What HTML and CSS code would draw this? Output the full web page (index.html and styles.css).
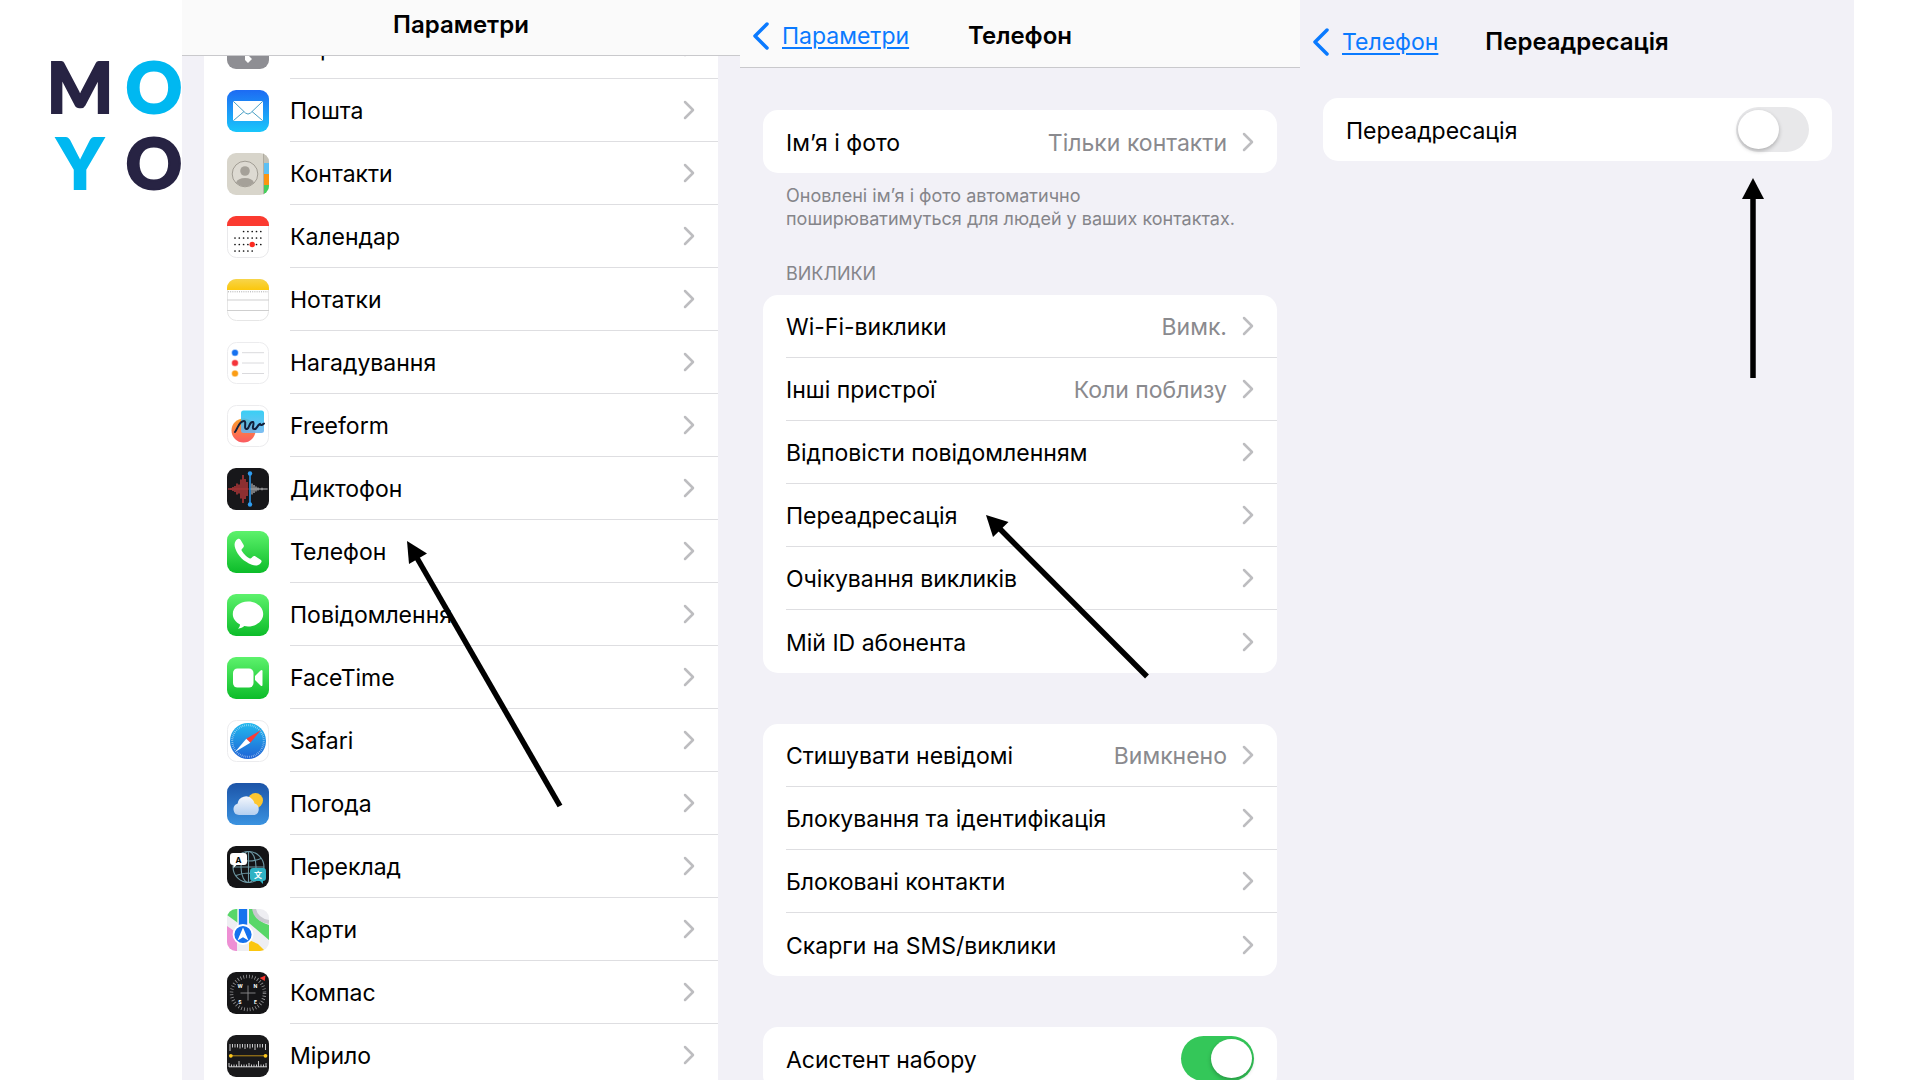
FILE: index.html
```html
<!DOCTYPE html>
<html lang="uk">
<head>
  <meta charset="UTF-8" />
  <meta name="viewport" content="width=device-width, initial-scale=1" />
  <title>Переадресація викликів</title>
  <link rel="stylesheet" href="styles.css">
</head>
<body>

<svg class="defs" aria-hidden="true">
  <defs>
    <linearGradient id="g-green" x1="0" y1="0" x2="0" y2="1"><stop offset="0" stop-color="#5df26c"/><stop offset="1" stop-color="#0cbc29"/></linearGradient>
    <linearGradient id="g-mail" x1="0" y1="0" x2="0" y2="1"><stop offset="0" stop-color="#1d6bf3"/><stop offset="1" stop-color="#19c6fb"/></linearGradient>
    <linearGradient id="g-note" x1="0" y1="0" x2="0" y2="1"><stop offset="0" stop-color="#f7d54b"/><stop offset="1" stop-color="#fbc70c"/></linearGradient>
    <linearGradient id="g-sky" x1="0" y1="0" x2="0" y2="1"><stop offset="0" stop-color="#1c54a8"/><stop offset="1" stop-color="#3a92e0"/></linearGradient>
    <linearGradient id="g-cloud" x1="0" y1="0" x2="0" y2="1"><stop offset="0" stop-color="#f4f7fc"/><stop offset="1" stop-color="#b4cff0"/></linearGradient>
    <linearGradient id="g-safari" x1="0" y1="0" x2="0" y2="1"><stop offset="0" stop-color="#22b9ee"/><stop offset="1" stop-color="#1f63d6"/></linearGradient>
    <linearGradient id="g-ball" x1="0" y1="0" x2="0" y2="1"><stop offset="0" stop-color="#fba02c"/><stop offset="1" stop-color="#fb5a62"/></linearGradient>
    <linearGradient id="g-square" x1="0" y1="0" x2="0" y2="1"><stop offset="0" stop-color="#1ec8f3"/><stop offset="1" stop-color="#6db4ef"/></linearGradient>
    <clipPath id="tile"><rect width="42" height="42" rx="9"/></clipPath>
  </defs>

  <symbol id="chevron" viewBox="0 0 12 20"><path d="M2 2l8 8-8 8" fill="none" stroke="currentColor" stroke-width="2.5" stroke-linecap="round" stroke-linejoin="round"/></symbol>
  <symbol id="back" viewBox="0 0 18 28"><path d="M15 2L3 14l12 12" fill="none" stroke="currentColor" stroke-width="3.5" stroke-linecap="round" stroke-linejoin="round"/></symbol>

  <symbol id="i-passwords" viewBox="0 0 42 42">
    <rect width="42" height="42" rx="9" fill="#8e8e93"/>
    <circle cx="21" cy="14" r="7" fill="#fff"/>
    <path d="M18 19h6v8l-2 2 3 3-4 4-3-3z" fill="#fff"/>
  </symbol>

  <symbol id="i-mail" viewBox="0 0 42 42">
    <rect width="42" height="42" rx="9" fill="url(#g-mail)"/>
    <rect x="6" y="11" width="30" height="20" rx="1.5" fill="#fff"/>
    <path d="M6.5 11.500l12 11.500q2.500 2.200 5 0l12-11.500M6.500 30.500L17 21.500M35.500 30.500L25 21.500" fill="none" stroke="#4a9fc4" stroke-width="1"/>
  </symbol>

  <symbol id="i-contacts" viewBox="0 0 42 42">
    <g clip-path="url(#tile)">
      <rect width="42" height="42" fill="#d8d5cb"/>
      <rect x="36" width="6" height="10" fill="#c4c1b6"/>
      <rect x="37" y="10" width="5" height="11" fill="#5cc0f5"/>
      <rect x="37" y="21" width="5" height="11" fill="#fb9410"/>
      <rect x="37" y="32" width="5" height="10" fill="#45cf5c"/>
      <path d="M36.500 0v42" stroke="#aaa69b" stroke-width=".8"/>
      <circle cx="18" cy="21" r="12.800" fill="#dddad2" stroke="#a19d94" stroke-width="1"/>
      <circle cx="18" cy="18" r="4.800" fill="#a5a199"/>
      <path d="M9 29.500q2-4.500 9-4.500t9 4.500q-3.500 4-9 4t-9-4z" fill="#a5a199"/>
    </g>
  </symbol>

  <symbol id="i-calendar" viewBox="0 0 42 42">
    <rect x=".5" y=".5" width="41" height="41" rx="9" fill="#fff" stroke="#e9e9eb"/>
    <path d="M0 10V9a9 9 0 0 1 9-9h24a9 9 0 0 1 9 9v1z" fill="#fb3a30"/>
    <g stroke="#111" stroke-width="1.700" stroke-linecap="round" stroke-dasharray="0 4.300">
      <path d="M16.600 15.500h17.500M8 22h26.100M8 28.500h26.100M8 35h17.500"/>
    </g>
    <circle cx="25.200" cy="28.500" r="2.700" fill="#fb2a20"/>
  </symbol>

  <symbol id="i-notes" viewBox="0 0 42 42">
    <rect x=".5" y=".5" width="41" height="41" rx="9" fill="#fff" stroke="#e6e6e6"/>
    <path d="M0 11V9a9 9 0 0 1 9-9h24a9 9 0 0 1 9 9v2z" fill="url(#g-note)"/>
    <path d="M1 12.800h40" stroke="#aaa" stroke-width="1" stroke-dasharray="1 1.200"/>
    <path d="M0 21h42M0 31.500h42" stroke="#cfcfcf" stroke-width="1"/>
  </symbol>

  <symbol id="i-reminders" viewBox="0 0 42 42">
    <rect x=".5" y=".5" width="41" height="41" rx="9" fill="#fff" stroke="#ececee"/>
    <g stroke-opacity=".45" stroke-width="1.500">
      <circle cx="8" cy="10.700" r="2.800" fill="#1672f0" stroke="#1672f0"/>
      <circle cx="8" cy="21" r="2.800" fill="#f5353b" stroke="#f5353b"/>
      <circle cx="8" cy="31.500" r="2.800" fill="#fb9d16" stroke="#fb9d16"/>
    </g>
    <path d="M15 10.700h22M15 21h22M15 31.500h22" stroke="#dadadd" stroke-width="1"/>
  </symbol>

  <symbol id="i-freeform" viewBox="0 0 42 42">
    <rect x=".5" y=".5" width="41" height="41" rx="9" fill="#fff" stroke="#ececee"/>
    <circle cx="16.500" cy="25.500" r="12" fill="url(#g-ball)"/>
    <rect x="14" y="5.500" width="23" height="22.500" rx="2.500" fill="url(#g-square)" fill-opacity=".88"/>
    <path d="M8 27c3-4 4-11 9-11 3 0-1 9 3 8 3-1 2-8 6-7 2 1-2 7 1 7 3 1 3-4 6-5 1 2 2 1 4-.5" fill="none" stroke="#12203c" stroke-width="2" stroke-linecap="round"/>
  </symbol>

  <symbol id="i-voice" viewBox="0 0 42 42">
    <rect width="42" height="42" rx="9" fill="#17171a"/>
    <path d="M2 20.500v1M4 20v2M6 19v4M8 18v6M10 15.500v11M12 16.500v9M14 11.500v19M16 7v28M18 11v20M20 14v14" stroke="#b5393a" stroke-width="1.500"/>
    <path d="M25 15.500v11M27 17v8M29 18.500v5M31 19.500v3M33 20.500v1M35 19.800v2.400M37 20.500v1M39 20.500v1" stroke="#c9c9cb" stroke-width="1.100"/>
    <path d="M1 21h21" stroke="#b5393a" stroke-width=".8"/>
    <path d="M23 21h18" stroke="#b9b9bb" stroke-width=".7"/>
    <path d="M23 5v32" stroke="#2f9df0" stroke-width="1.500"/>
    <circle cx="23" cy="5.500" r="2.200" fill="#2f9df0"/><circle cx="23" cy="36.500" r="2.200" fill="#2f9df0"/>
  </symbol>

  <symbol id="i-phone" viewBox="0 0 42 42">
    <rect width="42" height="42" rx="9" fill="url(#g-green)"/>
    <path d="M9 9.500c1.500-2 3.500-2.300 4.500-.8l3 5c.8 1.400.4 2.300-.6 3.300l-1 1c-.6.700-.4 1.300 0 2 2 3.300 4.500 5.600 7.500 7.300.8.400 1.400.4 2-.2l1.200-1.300c.9-.9 1.800-1 3-.3l5 3.200c1.500 1 1.300 2.300-.2 3.700-2.200 2.200-5 2.700-8.500 1.300C16.500 30.500 11 25 8.300 17.500 7.200 14.500 7.300 11.700 9 9.500z" fill="#fff"/>
  </symbol>

  <symbol id="i-messages" viewBox="0 0 42 42">
    <rect width="42" height="42" rx="9" fill="url(#g-green)"/>
    <path d="M21 7.500c8.500 0 15.200 5.600 15.200 12.500S29.500 32.500 21 32.500c-1.300 0-2.500-.1-3.700-.4-1.600 1.500-3.500 2.400-6.300 2.700 1.300-1.300 2-2.700 2-4.300C8.600 28.200 5.800 24.500 5.800 20 5.800 13.100 12.500 7.500 21 7.500z" fill="#fff"/>
  </symbol>

  <symbol id="i-facetime" viewBox="0 0 42 42">
    <rect width="42" height="42" rx="9" fill="url(#g-green)"/>
    <rect x="6" y="11.500" width="20.500" height="19" rx="4.500" fill="#fff"/>
    <path d="M28 19l5.500-5.500q2-1.500 2 .8v13.400q0 2.300-2 .8L28 23z" fill="#fff"/>
  </symbol>

  <symbol id="i-safari" viewBox="0 0 42 42">
    <rect x=".5" y=".5" width="41" height="41" rx="9" fill="#fff" stroke="#ececee"/>
    <circle cx="21" cy="21" r="18" fill="url(#g-safari)"/>
    <circle cx="21" cy="21" r="15.800" fill="none" stroke="#fff" stroke-opacity=".65" stroke-width="2" stroke-dasharray=".6 1.300"/>
    <path d="M34 10L19.300 18.700l4 4z" fill="#fb3b36"/>
    <path d="M8 32l11.300-13.300 4 4z" fill="#fff"/>
  </symbol>

  <symbol id="i-weather" viewBox="0 0 42 42">
    <rect width="42" height="42" rx="9" fill="url(#g-sky)"/>
    <circle cx="28.500" cy="17.500" r="7.500" fill="#fdc62f"/>
    <path d="M12 32a5.800 5.800 0 0 1-1.500-11.300A8.500 8.500 0 0 1 25.500 16.500q1.500 1.500 2 4A6 6 0 0 1 27.500 32z" fill="url(#g-cloud)"/>
  </symbol>

  <symbol id="i-maps" viewBox="0 0 42 42">
    <g clip-path="url(#tile)">
      <rect width="42" height="42" fill="#eeeef2"/>
      <path d="M0 0h11v14L0 6zM22 0h4q2 12 16 16v15L22 14z" fill="#58d768"/>
      <path d="M0 17l10 7v18H0z" fill="#ee8fd4"/>
      <path d="M22 42V31l9 4 7 7z" fill="#fbc60f"/>
      <path d="M27 0q2 11 15 13" fill="none" stroke="#c8c8ce" stroke-width="4"/>
      <path d="M11.500 0h9v22h-9z" fill="#1572ee"/>
      <path d="M11 0v20M21 0v20" stroke="#fff" stroke-width="1.200"/>
      <circle cx="16" cy="25.500" r="9.500" fill="#1572ee" stroke="#fff" stroke-width="1.800"/>
      <path d="M16 18.500l5.500 13-5.500-3.200-5.500 3.200z" fill="#fff"/>
    </g>
  </symbol>

  <symbol id="i-measure" viewBox="0 0 42 42">
    <rect width="42" height="42" rx="9" fill="#19191b"/>
    <path d="M3 9v7M13 9v4.500M23 9v4.500M28 9v6M38.500 9v6M5.500 9v3.500M8 9v3.500M10.500 9v3.500M15.500 9v3.500M18 9v5M20.500 9v3.500M25.500 9v3.500M30.500 9v3.500M33 9v3.500M35.500 9v3.500" stroke="#c9c9cb" stroke-width="1"/>
    <path d="M2 32v-4M4.500 32v-2.500M7 32v-2.500M9.500 32v-2.500M12 32v-6M14.500 32v-2.500M17 32v-2.500M19.500 32v-2.500M22 32v-4M24.500 32v-2.500M27 32v-2.500M29.500 32v-2.500M31.500 32v-6M34 32v-2.500M36.500 32v-2.500M39 32v-4M2 31.800h38" stroke="#c9c9cb" stroke-width="1"/>
    <path d="M3.500 20.800h35" stroke="#b98c17" stroke-width="1"/>
    <circle cx="3.800" cy="20.800" r="1.900" fill="#fdc81e"/><circle cx="38.500" cy="20.800" r="1.900" fill="#fdc81e"/>
  </symbol>
</svg>

<main class="board">
  <div class="logo" aria-label="MOYO">
    <span class="dark">M</span><span class="cyan">O</span>
    <span class="cyan">Y</span><span class="dark">O</span>
  </div>

  <section class="screen screen-settings">
    <header class="bar bar-top">
      <h1>Параметри</h1>
    </header>
    <nav class="apps">
      <a class="row" href="#"><svg class="app"><use href="#i-passwords"/></svg><span class="body"><span class="label">Паролі</span><svg class="chev"><use href="#chevron"/></svg></span></a>
      <a class="row" href="#"><svg class="app"><use href="#i-mail"/></svg><span class="body"><span class="label">Пошта</span><svg class="chev"><use href="#chevron"/></svg></span></a>
      <a class="row" href="#"><svg class="app"><use href="#i-contacts"/></svg><span class="body"><span class="label">Контакти</span><svg class="chev"><use href="#chevron"/></svg></span></a>
      <a class="row" href="#"><svg class="app"><use href="#i-calendar"/></svg><span class="body"><span class="label">Календар</span><svg class="chev"><use href="#chevron"/></svg></span></a>
      <a class="row" href="#"><svg class="app"><use href="#i-notes"/></svg><span class="body"><span class="label">Нотатки</span><svg class="chev"><use href="#chevron"/></svg></span></a>
      <a class="row" href="#"><svg class="app"><use href="#i-reminders"/></svg><span class="body"><span class="label">Нагадування</span><svg class="chev"><use href="#chevron"/></svg></span></a>
      <a class="row" href="#"><svg class="app"><use href="#i-freeform"/></svg><span class="body"><span class="label">Freeform</span><svg class="chev"><use href="#chevron"/></svg></span></a>
      <a class="row" href="#"><svg class="app"><use href="#i-voice"/></svg><span class="body"><span class="label">Диктофон</span><svg class="chev"><use href="#chevron"/></svg></span></a>
      <a class="row" href="#"><svg class="app"><use href="#i-phone"/></svg><span class="body"><span class="label">Телефон</span><svg class="chev"><use href="#chevron"/></svg></span></a>
      <a class="row" href="#"><svg class="app"><use href="#i-messages"/></svg><span class="body"><span class="label">Повідомлення</span><svg class="chev"><use href="#chevron"/></svg></span></a>
      <a class="row" href="#"><svg class="app"><use href="#i-facetime"/></svg><span class="body"><span class="label">FaceTime</span><svg class="chev"><use href="#chevron"/></svg></span></a>
      <a class="row" href="#"><svg class="app"><use href="#i-safari"/></svg><span class="body"><span class="label">Safari</span><svg class="chev"><use href="#chevron"/></svg></span></a>
      <a class="row" href="#"><svg class="app"><use href="#i-weather"/></svg><span class="body"><span class="label">Погода</span><svg class="chev"><use href="#chevron"/></svg></span></a>
      <a class="row" href="#">
        <svg class="app" viewBox="0 0 42 42">
          <rect width="42" height="42" rx="9" fill="#141416"/>
          <g fill="none" stroke="#6d98a4" stroke-width="1.100">
            <circle cx="21.500" cy="21" r="15.500"/><ellipse cx="21.500" cy="21" rx="7.500" ry="15.500"/>
            <path d="M21.500 5.500v31M6 21h31M9 12.500q12.500 5 25 0M9 29.500q12.500-5 25 0"/>
          </g>
          <path d="M6 7h11a3 3 0 0 1 3 3v6a3 3 0 0 1-3 3H9.500L6.500 22v-3H6a3 3 0 0 1-3-3v-6a3 3 0 0 1 3-3z" fill="#fff"/>
          <path d="M26 22h10a3 3 0 0 1 3 3v7a3 3 0 0 1-3 3v3l-3-3h-7a3 3 0 0 1-3-3v-7a3 3 0 0 1 3-3z" fill="#2fb2c4"/>
          <text x="11.500" y="16.500" class="glyph-a">A</text>
          <text x="31" y="32" class="glyph-cjk">文</text>
        </svg>
        <span class="body"><span class="label">Переклад</span><svg class="chev"><use href="#chevron"/></svg></span>
      </a>
      <a class="row" href="#"><svg class="app"><use href="#i-maps"/></svg><span class="body"><span class="label">Карти</span><svg class="chev"><use href="#chevron"/></svg></span></a>
      <a class="row" href="#">
        <svg class="app" viewBox="0 0 42 42">
          <rect width="42" height="42" rx="9" fill="#151517"/>
          <circle cx="21" cy="21" r="16.500" fill="none" stroke="#98989a" stroke-width="3.500" stroke-dasharray=".8 2.100"/>
          <path d="M21 13.500v15M13.500 21h15" stroke="#8b8b8d" stroke-width=".9"/>
          <path d="M38.500 3.500l-.8 5.500-5-3z" fill="#fb3930"/>
          <g class="glyph-nesw"><text x="13" y="15.500">W</text><text x="28.500" y="15.500">N</text><text x="13" y="31.500">S</text><text x="28.500" y="31.500">E</text></g>
        </svg>
        <span class="body"><span class="label">Компас</span><svg class="chev"><use href="#chevron"/></svg></span>
      </a>
      <a class="row" href="#"><svg class="app"><use href="#i-measure"/></svg><span class="body"><span class="label">Мірило</span><svg class="chev"><use href="#chevron"/></svg></span></a>
    </nav>
    <svg class="arrow arrow-phone" viewBox="0 0 160 270" aria-hidden="true">
      <path d="M10 17l143 248" stroke="#000" stroke-width="5.500"/><path d="M0 0l20 12.500L2 23z"/>
    </svg>
  </section>

  <section class="screen screen-phone">
    <header class="bar bar-phone">
      <a class="back" href="#"><svg><use href="#back"/></svg><span>Параметри</span></a>
      <h1>Телефон</h1>
    </header>
    <div class="groups">
      <div class="card">
        <a class="row" href="#"><span class="body"><span class="label">Ім’я і фото</span><span class="value">Тільки контакти</span><svg class="chev"><use href="#chevron"/></svg></span></a>
      </div>
      <p class="note">Оновлені ім’я і фото автоматично поширюватимуться для людей у ваших контактах.</p>
      <h2>ВИКЛИКИ</h2>
      <div class="card">
        <a class="row" href="#"><span class="body"><span class="label">Wi-Fi-виклики</span><span class="value">Вимк.</span><svg class="chev"><use href="#chevron"/></svg></span></a>
        <a class="row" href="#"><span class="body"><span class="label">Інші пристрої</span><span class="value">Коли поблизу</span><svg class="chev"><use href="#chevron"/></svg></span></a>
        <a class="row" href="#"><span class="body"><span class="label">Відповісти повідомленням</span><svg class="chev"><use href="#chevron"/></svg></span></a>
        <a class="row" href="#"><span class="body"><span class="label">Переадресація</span><svg class="chev"><use href="#chevron"/></svg></span></a>
        <a class="row" href="#"><span class="body"><span class="label">Очікування викликів</span><svg class="chev"><use href="#chevron"/></svg></span></a>
        <a class="row" href="#"><span class="body"><span class="label">Мій ID абонента</span><svg class="chev"><use href="#chevron"/></svg></span></a>
      </div>
      <div class="card spaced">
        <a class="row" href="#"><span class="body"><span class="label">Стишувати невідомі</span><span class="value">Вимкнено</span><svg class="chev"><use href="#chevron"/></svg></span></a>
        <a class="row" href="#"><span class="body"><span class="label">Блокування та ідентифікація</span><svg class="chev"><use href="#chevron"/></svg></span></a>
        <a class="row" href="#"><span class="body"><span class="label">Блоковані контакти</span><svg class="chev"><use href="#chevron"/></svg></span></a>
        <a class="row" href="#"><span class="body"><span class="label">Скарги на SMS/виклики</span><svg class="chev"><use href="#chevron"/></svg></span></a>
      </div>
      <div class="card spaced">
        <label class="row" for="dial-assist"><span class="body"><span class="label">Асистент набору</span><input class="switch" type="checkbox" id="dial-assist" checked></span></label>
      </div>
    </div>
    <svg class="arrow arrow-forward" viewBox="0 0 166 165" aria-hidden="true">
      <path d="M14 14l147 147.500" stroke="#000" stroke-width="5.500"/><path d="M0 0l22.500 7L7 22z"/>
    </svg>
  </section>

  <section class="screen screen-forward">
    <header class="bar bar-forward">
      <a class="back" href="#"><svg><use href="#back"/></svg><span>Телефон</span></a>
      <h1>Переадресація</h1>
    </header>
    <div class="groups">
      <div class="card">
        <label class="row" for="forwarding"><span class="body"><span class="label">Переадресація</span><input class="switch" type="checkbox" id="forwarding"></span></label>
      </div>
    </div>
    <svg class="arrow arrow-switch" viewBox="0 0 22 200" aria-hidden="true">
      <path d="M11 18v182" stroke="#000" stroke-width="5.500"/><path d="M11 0l11 21H0z"/>
    </svg>
  </section>
</main>

</body>
</html>
```
FILE: styles.css
```css
* {
  box-sizing: border-box;
}
body {
  margin: 0;
  background: #fff;
  color: #000;
  font-family: Inter, "Noto Sans", sans-serif;
  font-size: 23px;
  line-height: 30px;
}
h1, h2, p {
  margin: 0;
}
a {
  color: inherit;
  text-decoration: none;
}
.defs {
  position: absolute;
  width: 0;
  height: 0;
}

.board {
  display: grid;
  grid-template-columns: 182px 558fr 560fr 554fr 66px;
  height: 100vh;
  overflow: hidden;
}

/* logo */
.logo {
  display: grid;
  grid-template-columns: 74px 74px;
  align-content: start;
  justify-items: center;
  padding: 48px 0 0 43px;
  font-family: Lato, sans-serif;
  font-size: 70px;
  font-weight: 900;
  line-height: 76px;
  -webkit-text-stroke: 2px currentColor;
}
.dark {
  color: #272343;
}
.cyan {
  color: #00b8f1;
}

/* screens */
.screen {
  position: relative;
  min-width: 0;
  background: #f2f1f7;
}
.bar {
  position: relative;
  z-index: 1;
  display: grid;
  grid-template-columns: 1fr auto 1fr;
  align-items: center;
  padding: 0 12px;
}
.bar h1 {
  grid-column: 2;
  font-size: 24px;
  font-weight: 600;
}
.bar-top {
  height: 56px;
  padding-bottom: 6px;
  background: #fafafa;
  border-bottom: 1px solid #c9c9cc;
}
.bar-phone {
  height: 68px;
  padding-top: 4px;
  background: #fafafa;
  border-bottom: 1px solid #c9c9cc;
}
.bar-forward {
  height: 84px;
}
.back {
  display: flex;
  align-items: center;
  gap: 12px;
  color: #0a7aff;
}
.back svg {
  width: 18px;
  height: 28px;
}
.back span {
  text-decoration: underline;
  text-decoration-thickness: 2px;
  text-underline-offset: 3px;
}

/* rows */
.row {
  display: flex;
  align-items: center;
  gap: 20px;
  height: 63px;
  padding-left: 23px;
}
.body {
  flex: 1;
  display: flex;
  align-items: center;
  align-self: stretch;
  border-bottom: 1px solid #dedee1;
}
.card .row:last-child .body {
  border-bottom: 0;
}
.label {
  flex: 1;
  padding-top: 2px;
  white-space: nowrap;
}
.value {
  padding-top: 2px;
  color: #8a8a8e;
}
.chev {
  width: 12px;
  height: 20px;
  margin: 0 23px 0 15px;
  color: #bdbdc0;
}
.app {
  width: 42px;
  height: 42px;
}

/* the list is scrolled a little under the bar */
.apps {
  margin: -40px 22px 0;
  background: #fff;
}
.apps .row {
  gap: 21px;
}

.groups {
  padding: 42px 23px 0;
}
.card {
  background: #fff;
  border-radius: 15px;
}
.spaced {
  margin-top: 51px;
}
.note {
  padding: 11px 23px 0;
  color: #85858a;
  font-size: 18px;
  line-height: 23px;
}
.groups h2 {
  padding: 32px 23px 9px;
  color: #85858a;
  font-size: 18px;
  font-weight: 400;
  line-height: 24px;
}
.screen-forward .groups {
  padding: 14px 22px 0 23px;
}

.switch {
  appearance: none;
  display: flex;
  width: 73px;
  height: 45px;
  margin: 0 23px 0 0;
  padding: 3px 2px;
  border-radius: 23px;
  background: #e8e8ea;
}
.switch::before {
  content: "";
  width: 41px;
  border-radius: 50%;
  background: #fff;
  box-shadow: 0 2px 4px rgba(0, 0, 0, 0.25);
}
.switch:checked {
  justify-content: flex-end;
  background: #34c759;
}

/* pointers drawn over the screens */
.arrow {
  position: absolute;
  z-index: 2;
  pointer-events: none;
}
.arrow-phone {
  top: 541px;
  left: 225px;
  width: 160px;
  height: 270px;
}
.arrow-forward {
  top: 515px;
  left: 246px;
  width: 166px;
  height: 165px;
}
.arrow-switch {
  top: 178px;
  right: 90px;
  width: 22px;
  height: 200px;
}

.glyph-a {
  font-size: 8px;
  font-weight: 700;
  text-anchor: middle;
}
.glyph-cjk {
  font-family: "Noto Sans CJK SC", sans-serif;
  font-size: 8px;
  font-weight: 700;
  fill: #fff;
  text-anchor: middle;
}
.glyph-nesw {
  font-size: 5px;
  font-weight: 700;
  fill: #fff;
  text-anchor: middle;
}
```
